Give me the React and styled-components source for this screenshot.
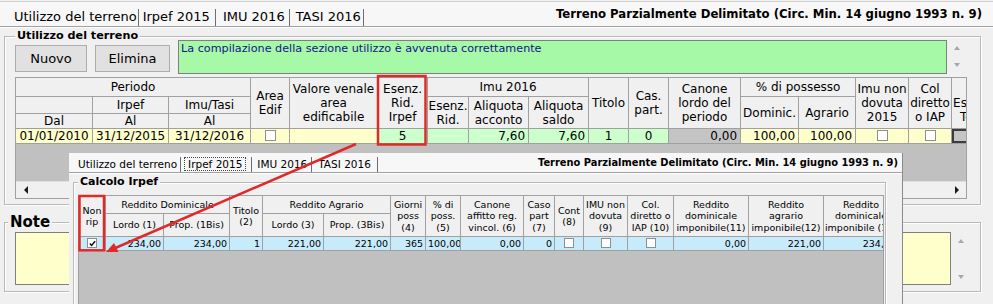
import React from "react";
import styled, { createGlobalStyle } from "styled-components";

const GlobalStyle = createGlobalStyle`
  html, body { margin: 0; padding: 0; background: #f0f0f0; }
  body { font-family: "DejaVu Sans", Verdana, sans-serif; color: #000; }
  *, *::before, *::after { box-sizing: border-box; }
`;

const FONT = `"DejaVu Sans", Verdana, sans-serif`;

const Window = styled.div`
  position: relative;
  width: 993px;
  height: 304px;
  overflow: hidden;
  background: #f0f0f0;
  padding-top: ${p => p.$pt || 0}px;
`;

const TabBar = styled.div`
  display: flex;
  height: ${p => p.$h}px;
  padding: 0 ${p => p.$pr}px 0 ${p => p.$pl}px;
  background: #f7f7f7;
  border-top: ${p => (p.$topLine ? "1px solid #d2d2d2" : "none")};
  border-bottom: 1px solid #a0a0a0;
  box-shadow: 0 1px 0 #ffffff;
`;

const Tab = styled.div`
  align-self: flex-end;
  height: ${p => p.$h}px;
  line-height: ${p => p.$lh}px;
  font-size: ${p => p.$fs}px;
  padding: 0 ${p => p.$pr}px 0 ${p => p.$pl}px;
  border-right: 1px solid #6e6e6e;
  white-space: nowrap;
`;

const FocusLabel = styled.span`
  display: inline-block;
  border: 1px dotted #444;
  padding: 0 3px;
  line-height: 12px;
  margin-left: -4px;
`;

const Title = styled.div`
  margin-left: auto;
  margin-top: ${p => p.$mt}px;
  align-self: flex-start;
  font-weight: bold;
  font-size: ${p => p.$fs}px;
  line-height: ${p => p.$lh}px;
  white-space: nowrap;
`;

const Group = styled.fieldset`
  margin: ${p => p.$m};
  padding: ${p => p.$p};
  border: 1px solid #b9b9b9;
  box-shadow: inset 1px 1px 0 #ffffff, 1px 1px 0 #ffffff;
  min-width: 0;
`;

const Legend = styled.legend`
  padding: 0 2px;
  margin-left: ${p => p.$ml || 0}px;
  font-weight: bold;
  font-size: ${p => p.$fs}px;
  line-height: ${p => p.$lh}px;
  background: #f0f0f0;
  white-space: nowrap;
`;

const TopRow = styled.div`
  display: flex;
  height: 34px;
  gap: 8px;
`;

const Button = styled.button`
  align-self: flex-start;
  margin-top: 5px;
  width: ${p => p.$w}px;
  height: 27px;
  padding: 0;
  font: 13px ${FONT};
  color: #000;
  background: #e1e1e1;
  border: 1px solid #adadad;
`;

const MessageField = styled.div`
  flex: 1;
  display: flex;
`;

const MessageBox = styled.div`
  flex: 1;
  background: #a6f9a6;
  border: 1px solid #7f7f7f;
  padding: 1px 2px;
  font-size: 11.2px;
  line-height: 13px;
  color: #14148c;
`;

const VScroll = styled.div`
  width: 20px;
  display: flex;
  flex-direction: column;
  align-items: center;
  justify-content: space-between;
  padding: ${p => p.$pad};
`;

const ArrowUp = styled.span`
  width: 0;
  height: 0;
  border-left: 3.5px solid transparent;
  border-right: 3.5px solid transparent;
  border-bottom: 4px solid ${p => p.$c || "#a8a8a8"};
`;

const ArrowDown = styled.span`
  width: 0;
  height: 0;
  border-left: 3.5px solid transparent;
  border-right: 3.5px solid transparent;
  border-top: 4px solid ${p => p.$c || "#a8a8a8"};
`;

const ArrowLeft = styled.span`
  width: 0;
  height: 0;
  border-top: 4px solid transparent;
  border-bottom: 4px solid transparent;
  border-right: 4px solid #1a1a1a;
`;

const ArrowRight = styled.span`
  width: 0;
  height: 0;
  border-top: 4px solid transparent;
  border-bottom: 4px solid transparent;
  border-left: 4px solid #1a1a1a;
`;

const GridWrap = styled.div`
  margin-top: ${p => p.$mt}px;
  height: ${p => p.$h}px;
  border: 1px solid #a0a0a0;
  background: #c0c0c0;
  display: flex;
  flex-direction: column;
  overflow: hidden;
`;

const GridClip = styled.div`
  flex: 1;
  overflow: hidden;
`;

const Grid = styled.table`
  border-collapse: collapse;
  table-layout: fixed;
  width: ${p => p.$w}px;
  margin: -1px 0 0 -1px;
  font-size: ${p => p.$fs}px;
`;

const Col = styled.col`
  width: ${p => p.$w}px;
`;

const Tr = styled.tr`
  height: ${p => p.$h}px;
`;

const Th = styled.th`
  padding: 0;
  border: 1px solid #a0a0a0;
  background: #f0f0f0;
  font-weight: normal;
  text-align: center;
  vertical-align: middle;
  line-height: ${p => p.$lh}px;
  white-space: nowrap;
  overflow: hidden;
`;

const BG = {
  yellow: "#ffffcc",
  green: "#ccffcc",
  gray: "#c4c4c4",
  blue: "#c8ebfc",
};

const Td = styled.td`
  padding: 0 ${p => p.$px ?? 3}px;
  border: 1px solid #a0a0a0;
  background: ${p => BG[p.$bg] || "#fff"};
  text-align: ${p => p.$al || "right"};
  vertical-align: middle;
  line-height: ${p => p.$lh}px;
  white-space: nowrap;
  overflow: hidden;
  box-shadow: ${p => (p.$focus ? "inset 0 0 0 2px #3c3c3c" : "none")};
`;

const HScroll = styled.div`
  height: 17px;
  display: flex;
  align-items: center;
  justify-content: space-between;
  background: #f0f0f0;
  border-top: 1px solid #e0e0e0;
`;

const ScrollBtn = styled.div`
  width: 19px;
  height: 16px;
  display: flex;
  align-items: center;
  justify-content: center;
`;

const CheckBox = styled.span`
  display: inline-flex;
  align-items: center;
  justify-content: center;
  width: ${p => p.$s}px;
  height: ${p => p.$s}px;
  border: 1px solid #8e8f8f;
  background: #ffffff;
  vertical-align: middle;
  position: relative;
  top: -1px;
`;

const NoteBody = styled.div`
  display: flex;
  height: 53px;
`;

const NoteText = styled.div`
  flex: 1;
  background: #ffffcc;
  border: 1px solid #7f7f7f;
`;

const Overlay = styled.div`
  position: absolute;
  left: 69px;
  top: 153px;
  width: 834px;
  height: 151px;
  background: #f0f0f0;
  border-right: 1px solid #8a8a8a;
  overflow: hidden;
`;

const Annotation = styled.svg`
  position: absolute;
  left: 0;
  top: 0;
  width: 993px;
  height: 304px;
  pointer-events: none;
`;

const Check = ({ s = 11, on }) => (
  <CheckBox $s={s}>
    {on && (
      <svg width={s - 3} height={s - 3} viewBox="0 0 8 8">
        <path d="M1 4 L3 6.2 L7 1.5" fill="none" stroke="#111" strokeWidth="1.8" />
      </svg>
    )}
  </CheckBox>
);

const baseCols = [77, 76, 82, 39, 88, 50, 41, 60, 60, 40, 40, 72, 58, 57, 53, 43, 42];
const overCols = [27, 58, 66, 33, 61, 67, 35, 35, 63, 31, 29, 44, 46, 75, 75, 75];

const L = ({ lines }) =>
  lines.map((t, i) => (
    <React.Fragment key={i}>
      {i > 0 && <br />}
      {t}
    </React.Fragment>
  ));

export default function App() {
  return (
    <>
      <GlobalStyle />
      <Window $pt={1}>
        <TabBar $h={26} $pl={9} $pr={11} $topLine>
          <Tab $h={17} $lh={16} $fs={13} $pl={5} $pr={1}>Utilizzo del terreno</Tab>
          <Tab $h={17} $lh={16} $fs={13} $pl={4} $pr={5}>Irpef 2015</Tab>
          <Tab $h={17} $lh={16} $fs={13} $pl={7} $pr={4}>IMU 2016</Tab>
          <Tab $h={17} $lh={16} $fs={13} $pl={6} $pr={2}>TASI 2016</Tab>
          <Title $fs={11.7} $lh={14} $mt={5}>
            Terreno Parzialmente Delimitato (Circ. Min. 14 giugno 1993 n. 9)
          </Title>
        </TabBar>

        <Group $m="5px 12px 0 4px" $p="0 13px 5px 10px">
          <Legend $fs={11.2} $lh={8}>Utilizzo del terreno</Legend>
          <TopRow>
            <Button $w={72}>Nuovo</Button>
            <Button $w={75}>Elimina</Button>
            <MessageField>
              <MessageBox>La compilazione della sezione utilizzo è avvenuta correttamente</MessageBox>
              <VScroll $pad="6px 0 7px">
                <ArrowUp />
                <ArrowDown />
              </VScroll>
            </MessageField>
          </TopRow>

          <GridWrap $mt={3} $h={122}>
            <GridClip>
              <Grid $w={978} $fs={12}>
                <colgroup>
                  {baseCols.map((w, i) => (
                    <Col key={i} $w={w} />
                  ))}
                </colgroup>
                <thead>
                  <Tr $h={19}>
                    <Th $lh={14} colSpan={3}>Periodo</Th>
                    <Th $lh={14} rowSpan={3}><L lines={["Area", "Edif"]} /></Th>
                    <Th $lh={14} rowSpan={3}><L lines={["Valore venale", "area", "edificabile"]} /></Th>
                    <Th $lh={14} rowSpan={3}><L lines={["Esenz.", "Rid.", "Irpef"]} /></Th>
                    <Th $lh={14} colSpan={3}>Imu 2016</Th>
                    <Th $lh={14} rowSpan={3}>Titolo</Th>
                    <Th $lh={14} rowSpan={3}><L lines={["Cas.", "part."]} /></Th>
                    <Th $lh={14} rowSpan={3}><L lines={["Canone", "lordo del", "periodo"]} /></Th>
                    <Th $lh={14} colSpan={2}>% di possesso</Th>
                    <Th $lh={14} rowSpan={3}><L lines={["Imu non", "dovuta", "2015"]} /></Th>
                    <Th $lh={14} rowSpan={3}><L lines={["Col", "diretto", "o IAP"]} /></Th>
                    <Th $lh={14} rowSpan={3}><L lines={["\u00a0", "Esenz.", "Terr."]} /></Th>
                  </Tr>
                  <Tr $h={17}>
                    <Th $lh={14} />
                    <Th $lh={14}>Irpef</Th>
                    <Th $lh={14}>Imu/Tasi</Th>
                    <Th $lh={14} rowSpan={2}><L lines={["Esenz.", "Rid."]} /></Th>
                    <Th $lh={14} rowSpan={2}><L lines={["Aliquota", "acconto"]} /></Th>
                    <Th $lh={14} rowSpan={2}><L lines={["Aliquota", "saldo"]} /></Th>
                    <Th $lh={14} rowSpan={2}>Dominic.</Th>
                    <Th $lh={14} rowSpan={2}>Agrario</Th>
                  </Tr>
                  <Tr $h={15}>
                    <Th $lh={14}>Dal</Th>
                    <Th $lh={14}>Al</Th>
                    <Th $lh={14}>Al</Th>
                  </Tr>
                </thead>
                <tbody>
                  <Tr $h={15}>
                    <Td $lh={13} $bg="yellow" $al="center">01/01/2010</Td>
                    <Td $lh={13} $bg="yellow" $al="center">31/12/2015</Td>
                    <Td $lh={13} $bg="yellow" $al="center">31/12/2016</Td>
                    <Td $lh={13} $bg="yellow" $al="center"><Check /></Td>
                    <Td $lh={13} $bg="yellow" />
                    <Td $lh={13} $bg="green" $al="center">5</Td>
                    <Td $lh={13} $bg="green" />
                    <Td $lh={13} $bg="green">7,60</Td>
                    <Td $lh={13} $bg="green">7,60</Td>
                    <Td $lh={13} $bg="green" $al="center">1</Td>
                    <Td $lh={13} $bg="green" $al="center">0</Td>
                    <Td $lh={13} $bg="gray">0,00</Td>
                    <Td $lh={13} $bg="yellow">100,00</Td>
                    <Td $lh={13} $bg="yellow">100,00</Td>
                    <Td $lh={13} $bg="yellow" $al="center"><Check /></Td>
                    <Td $lh={13} $bg="yellow" $al="center"><Check /></Td>
                    <Td $lh={13} $bg="gray" $focus />
                  </Tr>
                </tbody>
              </Grid>
            </GridClip>
            <HScroll>
              <ScrollBtn><ArrowLeft /></ScrollBtn>
              <ScrollBtn><ArrowRight /></ScrollBtn>
            </HScroll>
          </GridWrap>
        </Group>

        <Group $m="12px 12px 0 4px" $p="5px 9px 6px 10px">
          <Legend $fs={15} $lh={10} $ml={-7}>Note</Legend>
          <NoteBody>
            <NoteText />
            <VScroll $pad="7px 0 6px">
              <ArrowUp />
              <ArrowDown />
            </VScroll>
          </NoteBody>
        </Group>

        <Overlay>
          <TabBar $h={20} $pl={4} $pr={4}>
            <Tab $h={15} $lh={14} $fs={10.5} $pl={5} $pr={3}>Utilizzo del terreno</Tab>
            <Tab $h={15} $lh={14} $fs={10.5} $pl={7} $pr={5}><FocusLabel>Irpef 2015</FocusLabel></Tab>
            <Tab $h={15} $lh={14} $fs={10.5} $pl={5} $pr={4}>IMU 2016</Tab>
            <Tab $h={15} $lh={14} $fs={10.5} $pl={6} $pr={6}>TASI 2016</Tab>
            <Title $fs={9.9} $lh={12} $mt={4}>
              Terreno Parzialmente Delimitato (Circ. Min. 14 giugno 1993 n. 9)
            </Title>
          </TabBar>

          <Group $m="4px 16px 0 4px" $p="8px 1px 0 4px">
            <Legend $fs={11} $lh={10}>Calcolo Irpef</Legend>
            <GridWrap $mt={0} $h={120}>
              <GridClip>
                <Grid $w={820} $fs={9.5}>
                  <colgroup>
                    {overCols.map((w, i) => (
                      <Col key={i} $w={w} />
                    ))}
                  </colgroup>
                  <thead>
                    <Tr $h={18}>
                      <Th $lh={11.5} rowSpan={2}><L lines={["Non", "rip"]} /></Th>
                      <Th $lh={11.5} colSpan={2}>Reddito Dominicale</Th>
                      <Th $lh={11.5} rowSpan={2}><L lines={["Titolo", "(2)"]} /></Th>
                      <Th $lh={11.5} colSpan={2}>Reddito Agrario</Th>
                      <Th $lh={11.5} rowSpan={2}><L lines={["Giorni", "poss", "(4)"]} /></Th>
                      <Th $lh={11.5} rowSpan={2}><L lines={["% di", "poss.", "(5)"]} /></Th>
                      <Th $lh={11.5} rowSpan={2}><L lines={["Canone", "affitto reg.", "vincol. (6)"]} /></Th>
                      <Th $lh={11.5} rowSpan={2}><L lines={["Caso", "part", "(7)"]} /></Th>
                      <Th $lh={11.5} rowSpan={2}><L lines={["Cont", "(8)"]} /></Th>
                      <Th $lh={11.5} rowSpan={2}><L lines={["IMU non", "dovuta", "(9)"]} /></Th>
                      <Th $lh={11.5} rowSpan={2}><L lines={["Col.", "diretto o", "IAP (10)"]} /></Th>
                      <Th $lh={11.5} rowSpan={2}><L lines={["Reddito", "dominicale", "imponibile(11)"]} /></Th>
                      <Th $lh={11.5} rowSpan={2}><L lines={["Reddito", "agrario", "imponibile(12)"]} /></Th>
                      <Th $lh={11.5} rowSpan={2}><L lines={["Reddito", "dominicale", "imponibile (13)"]} /></Th>
                    </Tr>
                    <Tr $h={23}>
                      <Th $lh={11.5}>Lordo (1)</Th>
                      <Th $lh={11.5}>Prop. (1Bis)</Th>
                      <Th $lh={11.5}>Lordo (3)</Th>
                      <Th $lh={11.5}>Prop. (3Bis)</Th>
                    </Tr>
                  </thead>
                  <tbody>
                    <Tr $h={14}>
                      <Td $lh={12} $bg="blue" $al="center" $px={0}><Check s={10} on /></Td>
                      <Td $lh={12} $bg="blue" $px={2}>234,00</Td>
                      <Td $lh={12} $bg="blue" $px={2}>234,00</Td>
                      <Td $lh={12} $bg="blue" $px={2}>1</Td>
                      <Td $lh={12} $bg="blue" $px={2}>221,00</Td>
                      <Td $lh={12} $bg="blue" $px={2}>221,00</Td>
                      <Td $lh={12} $bg="blue" $px={2}>365</Td>
                      <Td $lh={12} $bg="blue" $px={2}>100,00</Td>
                      <Td $lh={12} $bg="blue" $px={2}>0,00</Td>
                      <Td $lh={12} $bg="blue" $px={2}>0</Td>
                      <Td $lh={12} $bg="blue" $al="center" $px={0}><Check s={10} /></Td>
                      <Td $lh={12} $bg="blue" $al="center" $px={0}><Check s={10} /></Td>
                      <Td $lh={12} $bg="blue" $al="center" $px={0}><Check s={10} /></Td>
                      <Td $lh={12} $bg="blue" $px={2}>0,00</Td>
                      <Td $lh={12} $bg="blue" $px={2}>221,00</Td>
                      <Td $lh={12} $bg="blue" $px={2}>234,00</Td>
                    </Tr>
                  </tbody>
                </Grid>
              </GridClip>
            </GridWrap>
          </Group>
        </Overlay>

        <Annotation viewBox="0 0 993 304">
          <rect x="378" y="76" width="47.5" height="68.5" fill="none" stroke="#e02a2a" strokeWidth="2.5" />
          <rect x="79.5" y="196" width="24.5" height="54.3" fill="none" stroke="#e02a2a" strokeWidth="2.5" />
          <line x1="356" y1="144" x2="113" y2="249" stroke="#e02a2a" strokeWidth="2.5" />
          <polygon points="106,252 118.5,252 114,243" fill="#e02a2a" />
        </Annotation>
      </Window>
    </>
  );
}
